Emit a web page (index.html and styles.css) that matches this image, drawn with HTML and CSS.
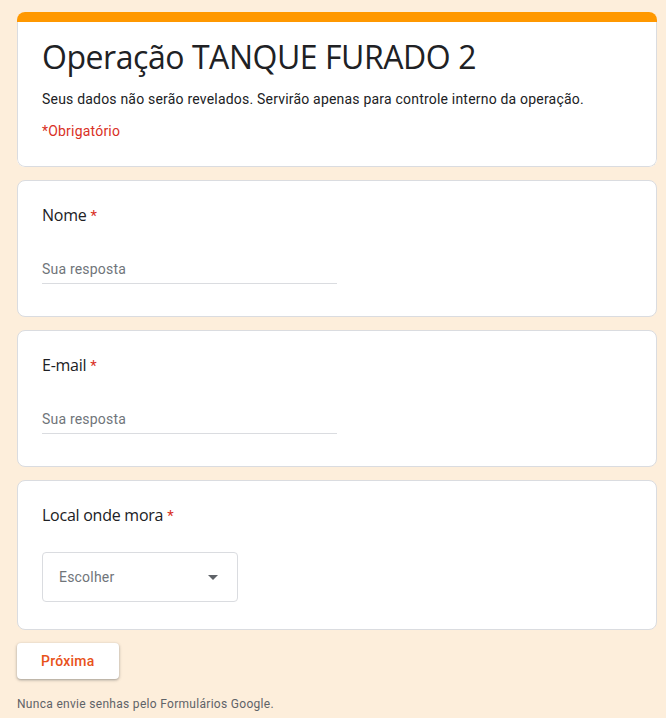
FILE: index.html
```html
<!DOCTYPE html>
<html lang="pt-BR">
<head>
<meta charset="utf-8">
<title>Operação TANQUE FURADO 2</title>
<link rel="stylesheet" href="styles.css">
</head>
<body>
<main class="form">
  <section class="header">
    <div class="header-bar"></div>
    <div class="header-body">
      <h1 class="form-title">Operação TANQUE FURADO 2</h1>
      <p class="form-desc">Seus dados não serão revelados. Servirão apenas para controle interno da operação.</p>
      <p class="required-legend">*Obrigatório</p>
    </div>
  </section>

  <section class="card">
    <div class="q-title">Nome <span class="star">*</span></div>
    <div class="text-input">Sua resposta</div>
  </section>

  <section class="card">
    <div class="q-title">E-mail <span class="star">*</span></div>
    <div class="text-input">Sua resposta</div>
  </section>

  <section class="card">
    <div class="q-title">Local onde mora <span class="star">*</span></div>
    <div class="select">
      <span class="select-label">Escolher</span>
      <svg class="select-arrow" width="24" height="24" viewBox="0 0 24 24"><path d="M7 10l5 5 5-5z" fill="#5f6368"/></svg>
    </div>
  </section>

  <div class="actions">
    <button class="next-btn" type="button">Próxima</button>
  </div>

  <p class="footer-note">Nunca envie senhas pelo Formulários Google.</p>
</main>
</body>
</html>
```

FILE: styles.css
```css
* { box-sizing: border-box; }

html, body {
  margin: 0;
  padding: 0;
  background: #fdeedb;
}

body {
  font-family: Roboto, "Liberation Sans", Arial, sans-serif;
  color: #202124;
  letter-spacing: .2px;
}

.form {
  width: 640px;
  margin-left: 17px;
  padding-top: 12px;
  display: flex;
  flex-direction: column;
  gap: 13px;
}

.header {
  border-radius: 8px;
  overflow: hidden;
  background: #fff;
}

.header-bar {
  height: 10px;
  background: #ff9800;
}

.header-body {
  border: 1px solid #dadce0;
  border-top: none;
  border-radius: 0 0 8px 8px;
  padding: 15px 24px 25px;
}

.form-title {
  margin: 0;
  font-family: "Open Sans", sans-serif;
  font-weight: 400;
  font-size: 32px;
  line-height: 40px;
  letter-spacing: -0.45px;
  color: #202124;
}

.form-desc {
  margin: 12px 0 0;
  font-size: 14px;
  line-height: 20px;
}

.required-legend {
  margin: 12px 0 0;
  font-size: 14px;
  line-height: 20px;
  color: #d93025;
}

.card {
  background: #fff;
  border: 1px solid #dadce0;
  border-radius: 8px;
  padding: 24px;
}

.q-title {
  height: 24px;
  font-family: "Open Sans", sans-serif;
  font-size: 16px;
  line-height: 20px;
  letter-spacing: -0.25px;
  color: #202124;
}

.star {
  font-family: Roboto, sans-serif;
  font-size: 15px;
  line-height: 1;
  color: #d93025;
}

.text-input {
  width: 295px;
  margin-top: 28px;
  margin-bottom: 8px;
  padding-bottom: 2px;
  border-bottom: 1px solid #dadce0;
  font-size: 14px;
  line-height: 24px;
  color: #70757a;
}

.select {
  width: 196px;
  height: 50px;
  margin-top: 23px;
  margin-bottom: 3px;
  border: 1px solid #dadce0;
  border-radius: 4px;
  display: flex;
  align-items: center;
  justify-content: space-between;
  padding: 0 12px 0 16px;
}

.select-label {
  font-size: 14px;
  line-height: 20px;
  color: #70757a;
}

.select-arrow {
  display: block;
}

.actions {
  display: flex;
}

.next-btn {
  height: 36px;
  padding: 0 24px;
  border: none;
  border-radius: 4px;
  background: #fff;
  box-shadow: 0 1px 2px rgba(60, 64, 67, .3), 0 1px 3px 1px rgba(60, 64, 67, .15);
  font-family: Roboto, "Liberation Sans", sans-serif;
  font-weight: 500;
  font-size: 14px;
  letter-spacing: .25px;
  color: #e8521a;
}

.footer-note {
  margin: 4px 0 0;
  font-size: 12px;
  line-height: 16px;
  letter-spacing: .3px;
  color: #5f6368;
}
```
